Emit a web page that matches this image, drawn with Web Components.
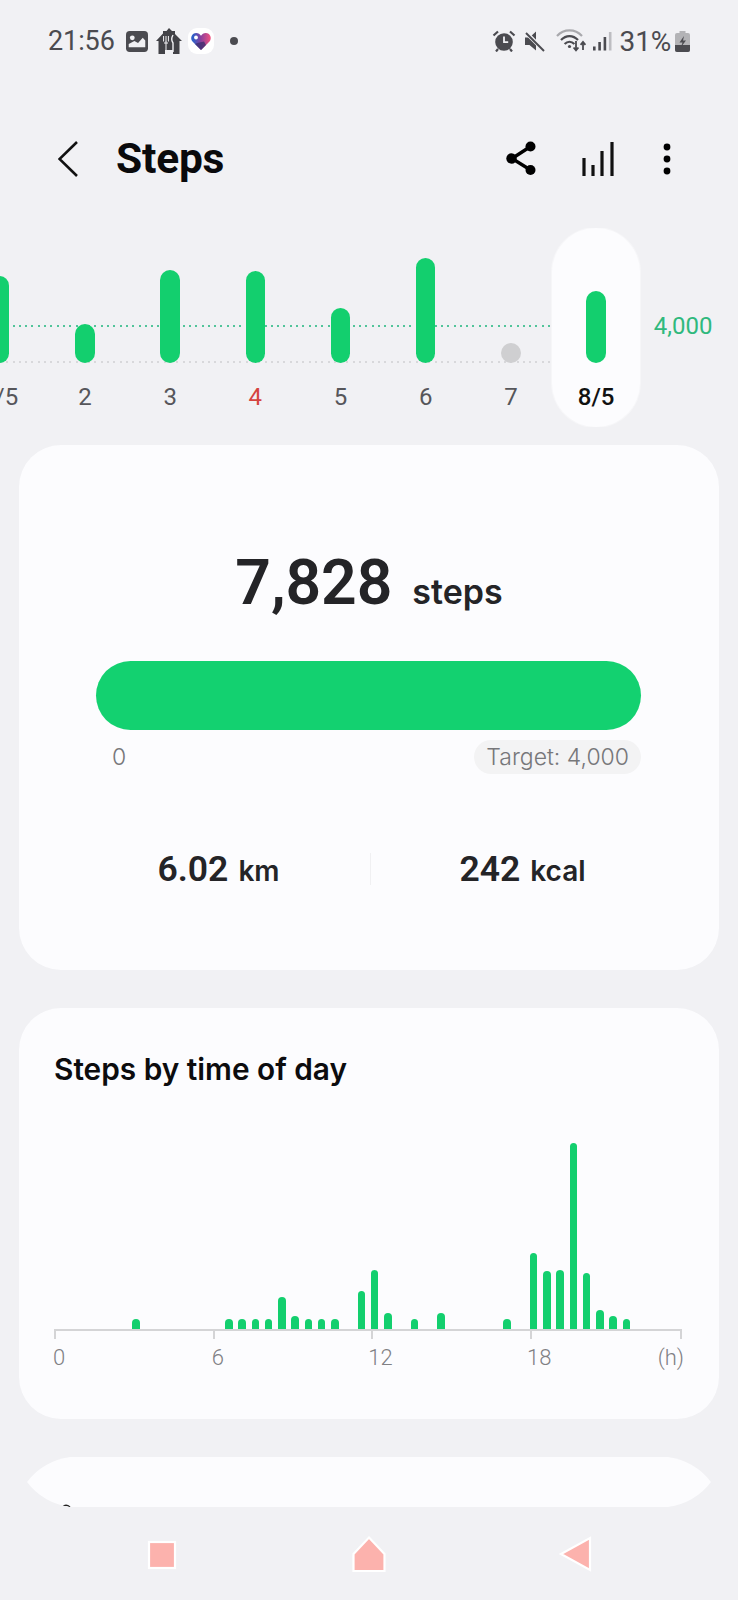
<!DOCTYPE html>
<html lang="en"><head><meta charset="utf-8"><title>Steps</title>
<style>
html,body{margin:0;padding:0;background:#f1f1f4;font-family:Roboto,"Liberation Sans",sans-serif;}
body{width:738px;height:1600px;overflow:hidden;}
</style></head><body>
<status-bar></status-bar>
<app-header></app-header>
<week-chart></week-chart>
<summary-card></summary-card>
<time-card></time-card>
<peek-card></peek-card>
<nav-bar></nav-bar>
<script>
function def(name, html, init){
  customElements.define(name, class extends HTMLElement{
    constructor(){super();this.attachShadow({mode:'open'}).innerHTML=html;if(init)init(this.shadowRoot);}
  });
}
const DK='#4b4b50';
def('status-bar',`<style>
:host{display:flex;align-items:center;height:82px;box-sizing:border-box;padding-left:48px;color:${DK};font-size:27px;}
svg{display:block;flex:none}
.t{letter-spacing:-.1px;width:67px;margin-right:11px;line-height:82px}
.sp{flex:1}
.p{margin:0 4px 0 8px;font-size:28px;letter-spacing:-.2px}
</style>
<span class="t">21:56</span>
<svg width="22" height="21" viewBox="0 0 21 20" style="margin-right:8px"><rect width="21" height="20" rx="3.5" fill="${DK}"/><circle cx="6" cy="6.5" r="2.3" fill="#f1f1f4"/><path d="M2.6 15.5 V12.5 L8 9.5 11.5 11.5 16 6.5 18.4 9 V15.5 Z" fill="#f1f1f4"/></svg>
<svg width="26" height="26" viewBox="0 0 26 26" style="margin-right:6px"><path d="M0 13 L7 5.5 V3 H10.5 L13 0 16 3 H19 V6 L26 13 H23.5 V26 H17 V22 H9 V26 H2.5 V13 Z" fill="#424247"/><path d="M7.6 8 V13.5 M10 8 V13.5 M12.4 8 V13.5 M8 15 H12 M10 13 V24" stroke="#f1f1f4" stroke-width="1" fill="none"/><path d="M17 7 C15.2 10 15.6 13 17 15 V24" stroke="#f1f1f4" stroke-width="1.4" fill="none"/></svg>
<svg width="26" height="26" viewBox="0 0 26 26" style="margin-right:16px"><defs><linearGradient id="h" x1="0" x2="1" y1="0" y2="0"><stop offset=".1" stop-color="#2f5fc8"/><stop offset=".5" stop-color="#8c3f9c"/><stop offset="1" stop-color="#f2527f"/></linearGradient></defs><rect width="26" height="26" rx="9" fill="#fff"/><path d="M13 22 L4.5 13.5 C1.6 10 4 5 8.2 5 C10.4 5 12 6.2 13 7.8 C14 6.2 15.6 5 17.8 5 C22 5 24.4 10 21.5 13.5 Z" fill="url(#h)"/><path d="M13 22 L7 16 C10 14.5 13 14.5 16 13.5 L18 17 Z" fill="#3a2d6e" opacity=".75"/><circle cx="8" cy="9.5" r="1.9" fill="#fff"/></svg>
<svg width="8" height="8" viewBox="0 0 8 8"><circle cx="4" cy="4" r="4" fill="${DK}"/></svg>
<span class="sp"></span>
<svg width="24" height="22" viewBox="0 0 24 22" style="margin-right:8px"><circle cx="12" cy="12" r="8.8" fill="${DK}"/><path d="M12 6.5 V12.2 H16.2" stroke="#f1f1f4" stroke-width="1.8" fill="none"/><path d="M1.5 5.5 L6 1.5 M22.5 5.5 L18 1.5 M6 19 L4 21.5 M18 19 L20 21.5" stroke="${DK}" stroke-width="2.2"/></svg>
<svg width="21" height="22" viewBox="0 0 21 22" style="margin-right:11px"><path d="M1 7.5 H5.5 L12 1.5 V20.5 L5.5 15 H1 Z" fill="${DK}"/><path d="M1.5 2 L20 20.5" stroke="#f1f1f4" stroke-width="4"/><path d="M2 3 L20 21" stroke="${DK}" stroke-width="2"/></svg>
<svg width="31" height="24" viewBox="0 0 31 24" style="margin-right:6px"><path d="M1 7 C8 -.5 19 -.5 26 7" stroke="#a9a9ad" stroke-width="2.2" fill="none"/><path d="M5 11 C10 5.8 17 5.8 22 11" stroke="${DK}" stroke-width="2.2" fill="none"/><path d="M8.6 15 C11.6 12 15.4 12 18.4 15" stroke="${DK}" stroke-width="2.2" fill="none"/><circle cx="13.5" cy="17.5" r="1.6" fill="${DK}"/><path d="M20 12 V21 M17.6 18.5 L20 21.4 22.4 18.5 M27 21 V13 M24.6 15.8 L27 13 29.4 15.8" stroke="${DK}" stroke-width="1.8" fill="none"/></svg>
<svg width="19" height="20" viewBox="0 0 19 20"><rect x="0" y="15.5" width="2.6" height="4" fill="${DK}"/><rect x="5.3" y="11" width="2.6" height="8.5" fill="${DK}"/><rect x="10.6" y="6" width="2.6" height="13.5" fill="${DK}"/><rect x="15.9" y="1" width="2.6" height="18.5" fill="#bdbdc1"/></svg>
<span class="p">31%</span>
<svg width="15" height="21" viewBox="0 0 15 21" style="margin-right:48px"><rect x="4.5" width="6" height="2.5" fill="#b3b3b6"/><rect y="2" width="15" height="19" rx="2" fill="#b3b3b6"/><path d="M0 14 H15 V19 a2 2 0 0 1 -2 2 H2 a2 2 0 0 1 -2 -2 Z" fill="${DK}"/><path d="M9 5 L4.5 11.5 H7.5 L6 16 L11 9.5 H8 Z" fill="${DK}"/></svg>
`);
def('app-header',`<style>
:host{display:flex;align-items:center;height:146px;box-sizing:border-box;padding:7px 0 0 58px;}
svg{display:block;flex:none}
h1{margin:0 0 0 38px;font:700 42.5px/139px Roboto,sans-serif;color:#0a0a0c;flex:1;letter-spacing:-.2px}
</style>
<svg width="20" height="36" viewBox="0 0 20 36"><path d="M19 1 L1.5 18 19 35" stroke="#111" stroke-width="2.6" fill="none"/></svg>
<h1>Steps</h1>
<svg width="30" height="36" viewBox="0 0 30 36" style="margin-right:46px"><path d="M24.5 5.5 L6 17.5 24.5 29" stroke="#000" stroke-width="3.4" fill="none"/><circle cx="24.5" cy="5.5" r="5" fill="#000"/><circle cx="5.5" cy="17.5" r="5.2" fill="#000"/><circle cx="24.5" cy="29" r="5" fill="#000"/></svg>
<svg width="33" height="36" viewBox="0 0 33 36" style="margin-right:48px"><path d="M2 35 V17 M11 35 V24 M20 35 V10 M30 35 V1" stroke="#111" stroke-width="3.2" fill="none"/></svg>
<svg width="8" height="32" viewBox="0 0 8 32" style="margin-right:67px"><circle cx="4" cy="4" r="3.4" fill="#000"/><circle cx="4" cy="16" r="3.4" fill="#000"/><circle cx="4" cy="28" r="3.4" fill="#000"/></svg>
`);
def('week-chart',`<style>
:host{display:block;position:relative;height:199px;overflow:hidden;width:738px}
.line{position:absolute;left:0;width:552px;height:2px}
.g{top:97px;background:repeating-linear-gradient(90deg,#52c49a 0 2px,transparent 2px 6.3px)}
.k{top:133px;background:repeating-linear-gradient(90deg,#d8d8db 0 2px,transparent 2px 6.3px)}
.row{position:relative;display:flex;margin-left:-42.8px;width:800px}
.day{flex:none;width:85.2px;display:flex;flex-direction:column;align-items:center;box-sizing:border-box;height:199px}
.sel{width:88px;margin:0 -1.4px;background:#fcfcfe;border-radius:44px;box-shadow:0 0 0 1px #f6f6f8}
.area{height:134.5px;display:flex;align-items:flex-end}
.bar{width:19.4px;border-radius:10px;background:#13cf6e}
.none{background:#cfcfd1}
.lab{margin-top:19px;font-size:24px;line-height:30px;color:#56565a;white-space:nowrap}
.red{color:#d5433f}
.sel .lab{color:#111;font-weight:500}
.target{margin:0 0 0 15px;padding-top:83px;font-size:24px;line-height:30px;color:#2fb97d}
</style>
<div class="line g"></div><div class="line k"></div>
<div class="row" id="r"></div>`,root=>{
  const days=[['1/5',86.5],['2',38.5],['3',92.5],['4',91.5],['5',54.5],['6',104.5],['7',19.4,'none'],['8/5',71.5,'','sel']];
  const r=root.getElementById('r');
  r.innerHTML=days.map(d=>`<div class="day ${d[3]||''}"><div class="area"><div class="bar ${d[2]||''}" style="height:${d[1]}px"></div></div><div class="lab ${d[0]==='4'?'red':''}">${d[0]}</div></div>`).join('')+`<div class="target">4,000</div>`;
});
def('summary-card',`<style>
:host{display:block;margin:18px 19px 0;height:525px;background:#fcfcfe;border-radius:42px;color:#242427;overflow:hidden}
.head{display:flex;justify-content:center;align-items:baseline;gap:20px;padding-top:102px;line-height:72px;height:72px}
.big{font-size:62.5px;font-weight:600;letter-spacing:-.1px}
.unit{font:600 34px/72px Inter,Roboto,sans-serif}
.bar{margin:42px 78px 0 77px;height:69px;border-radius:35px;background:#13d170}
.scale{display:flex;justify-content:space-between;align-items:center;margin:10px 78px 0 77px;font:300 23px Inter,Roboto,sans-serif;color:#77777a}
.pill{background:#f3f3f4;border-radius:17px;height:34px;line-height:34px;padding:0 12px}
.z{margin-left:16px}
.stats{display:flex;margin:79px 45px 0 48px;align-items:center;height:32px}
.stat{flex:1;text-align:center;white-space:nowrap;font:600 28px Inter,Roboto,sans-serif}
.stat b{font:600 35.5px Roboto,sans-serif;margin-right:3px}
.div{width:1px;height:32px;background:#f0f0f2}
</style>
<div class="head"><span class="big">7,828</span><span class="unit">steps</span></div>
<div class="bar"></div>
<div class="scale"><span class="z">0</span><span class="pill">Target: 4,000</span></div>
<div class="stats"><div class="stat"><b>6.02</b> km</div><div class="div"></div><div class="stat"><b>242</b> kcal</div></div>
`);
def('time-card',`<style>
:host{display:block;margin:38px 19px 0;height:411px;background:#fcfcfe;border-radius:42px;overflow:hidden;box-sizing:border-box;padding-top:43px}
h2{margin:0 0 0 35px;font:600 29.8px/36px Inter,Roboto,sans-serif;color:#0c0c0e;height:36px;white-space:nowrap}
.plot{margin:0 0 0 31px;height:242px;display:grid;grid-template-columns:repeat(48,13.25px);align-items:end;margin-top:0}
.plot i{display:block;width:7.7px;justify-self:center;background:#13cf6e;border-radius:4px 4px 0 0}
.axis{margin-left:35px;width:628px;display:grid;grid-template-columns:repeat(3,158.67px) 1fr;border-top:2px solid #d4d4d6;box-sizing:border-box;color:#808084;font-size:22px;font-weight:300;line-height:28px}
.axis div{border-left:2px solid #d4d4d6;height:8px;position:relative}
.axis span{display:block;margin:13px 0 0 -3px;white-space:nowrap}
.axis .n{margin-left:-5px}
.last{display:flex;justify-content:space-between;border-right:2px solid #d4d4d6}
.last span + span{margin:13px -4px 0 0}
</style>
<h2>Steps by time of day</h2>
<div class="plot" id="p"></div>
<div class="axis"><div><span>0</span></div><div><span>6</span></div><div><span class="n">12</span></div><div class="last"><span class="n">18</span><span>(h)</span></div></div>
`,root=>{
  const v={6:10,13:10,14:10,15:10,16:10,17:32,18:13,19:10,20:10,21:10,23:38,24:59,25:16,27:10,29:16,34:10,36:76,37:58,38:59,39:186,40:56,41:19,42:13,43:10};
  let h='';for(let i=0;i<48;i++)h+=`<i style="height:${v[i]||0}px"></i>`;
  root.getElementById('p').innerHTML=h;
});
def('peek-card',`<style>
:host{display:block;position:relative;margin:38px 27px 0;height:50px;background:#fcfcfe;clip-path:path("M43 0 H641 Q668 4 684 25 Q668 46 641 50 H43 Q16 46 0 25 Q16 4 43 0 Z")}
svg{position:absolute;left:34px;top:47px}
</style>
<svg width="12" height="5" viewBox="0 0 12 5"><path d="M1.5 3 C3.5 1 6.5 1 9 3" stroke="#222" stroke-width="1.4" fill="none"/></svg>`);
def('nav-bar',`<style>
:host{display:flex;justify-content:center;height:93px;align-items:flex-start}
div{width:207px;display:flex;justify-content:center}
svg{display:block}
</style>
<div><svg width="30" height="30" viewBox="0 0 30 30" style="margin-top:33px"><rect x="2" y="2" width="26" height="26" fill="#fcb2ad" stroke="#fff" stroke-width="2.2"/></svg></div>
<div><svg width="38" height="38" viewBox="0 0 38 38" style="margin-top:28px"><path d="M19 2.5 L34.5 19 V36 H3.5 V19 Z" fill="#fcb2ad" stroke="#fff" stroke-width="2.2"/></svg></div>
<div><svg width="36" height="38" viewBox="0 0 36 38" style="margin-top:28px"><path d="M32 3 V35 L3 19 Z" fill="#fcb2ad" stroke="#fff" stroke-width="2.2"/></svg></div>
`);
</script>
</body></html>
